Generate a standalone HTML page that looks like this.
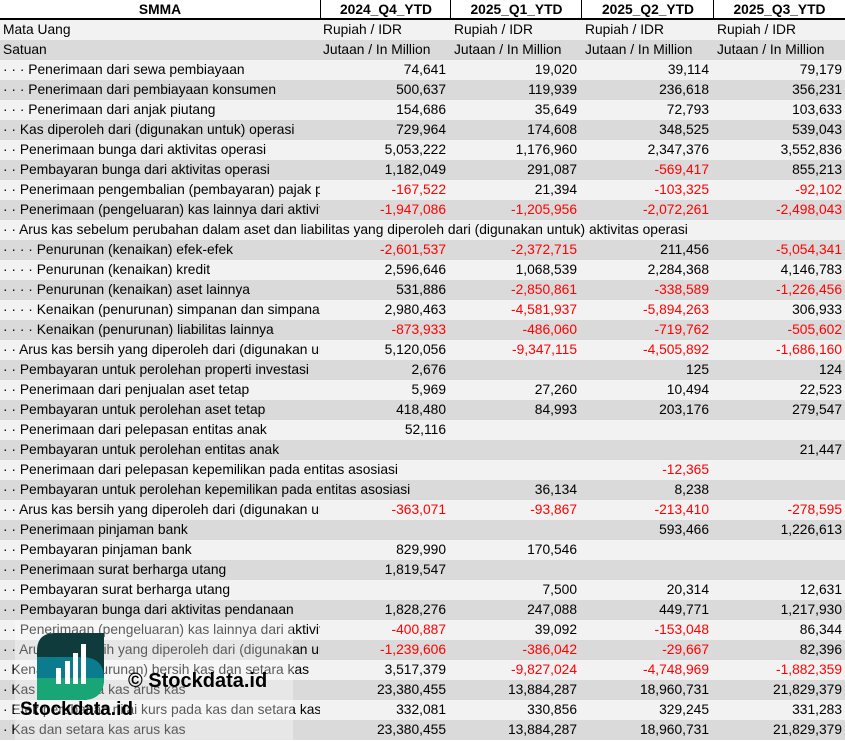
<!DOCTYPE html>
<html><head><meta charset="utf-8"><style>
*{margin:0;padding:0;box-sizing:border-box}
body{width:845px;height:741px;overflow:hidden;background:#fff;font-family:"Liberation Sans",sans-serif;font-size:13.8px;color:#000;position:relative}
.r{position:absolute;left:0;width:845px;height:20px;line-height:20px}
.l{background:#f2f2f2}.d{background:#dadada}
.c{position:absolute;top:0;height:20px;white-space:nowrap;overflow:hidden}
.a{left:3px;width:317px}
.n{text-align:right}
.n1{left:320px;width:126px}.n2{left:450px;width:127px}.n3{left:581px;width:128px}.n4{left:713px;width:129px}
.u1{left:323px}.u2{left:454px}.u3{left:585px}.u4{left:717px}
.red{color:#f00}
.h{position:absolute;top:0;height:20px;line-height:20px;font-weight:bold;text-align:center;border-bottom:2px solid #000}
</style></head><body>
<div class="h" style="left:0;width:320px">SMMA</div>
<div class="h" style="left:320px;width:131px;border-left:1px solid #000">2024_Q4_YTD</div>
<div class="h" style="left:450px;width:132px;border-left:1px solid #000">2025_Q1_YTD</div>
<div class="h" style="left:581px;width:133px;border-left:1px solid #000">2025_Q2_YTD</div>
<div class="h" style="left:713px;width:132px;border-left:1px solid #000">2025_Q3_YTD</div>

<div class="r l" style="top:20px"><div class="c a">Mata Uang</div><div class="c u1">Rupiah / IDR</div><div class="c u2">Rupiah / IDR</div><div class="c u3">Rupiah / IDR</div><div class="c u4">Rupiah / IDR</div></div>
<div class="r d" style="top:40px"><div class="c a">Satuan</div><div class="c u1">Jutaan / In Million</div><div class="c u2">Jutaan / In Million</div><div class="c u3">Jutaan / In Million</div><div class="c u4">Jutaan / In Million</div></div>

<div class="r l" style="top:60px"><div class="c a">· · · Penerimaan dari sewa pembiayaan</div><div class="c n n1">74,641</div><div class="c n n2">19,020</div><div class="c n n3">39,114</div><div class="c n n4">79,179</div></div>
<div class="r d" style="top:80px"><div class="c a">· · · Penerimaan dari pembiayaan konsumen</div><div class="c n n1">500,637</div><div class="c n n2">119,939</div><div class="c n n3">236,618</div><div class="c n n4">356,231</div></div>
<div class="r l" style="top:100px"><div class="c a">· · · Penerimaan dari anjak piutang</div><div class="c n n1">154,686</div><div class="c n n2">35,649</div><div class="c n n3">72,793</div><div class="c n n4">103,633</div></div>
<div class="r d" style="top:120px"><div class="c a">· · Kas diperoleh dari (digunakan untuk) operasi</div><div class="c n n1">729,964</div><div class="c n n2">174,608</div><div class="c n n3">348,525</div><div class="c n n4">539,043</div></div>
<div class="r l" style="top:140px"><div class="c a">· · Penerimaan bunga dari aktivitas operasi</div><div class="c n n1">5,053,222</div><div class="c n n2">1,176,960</div><div class="c n n3">2,347,376</div><div class="c n n4">3,552,836</div></div>
<div class="r d" style="top:160px"><div class="c a">· · Pembayaran bunga dari aktivitas operasi</div><div class="c n n1">1,182,049</div><div class="c n n2">291,087</div><div class="c n n3 red">-569,417</div><div class="c n n4">855,213</div></div>
<div class="r l" style="top:180px"><div class="c a">· · Penerimaan pengembalian (pembayaran) pajak penghasilan</div><div class="c n n1 red">-167,522</div><div class="c n n2">21,394</div><div class="c n n3 red">-103,325</div><div class="c n n4 red">-92,102</div></div>
<div class="r d" style="top:200px"><div class="c a">· · Penerimaan (pengeluaran) kas lainnya dari aktivitas operasi</div><div class="c n n1 red">-1,947,086</div><div class="c n n2 red">-1,205,956</div><div class="c n n3 red">-2,072,261</div><div class="c n n4 red">-2,498,043</div></div>
<div class="r l" style="top:220px"><div class="c" style="left:3px">· · Arus kas sebelum perubahan dalam aset dan liabilitas yang diperoleh dari (digunakan untuk) aktivitas operasi</div></div>
<div class="r d" style="top:240px"><div class="c a">· · · · Penurunan (kenaikan) efek-efek</div><div class="c n n1 red">-2,601,537</div><div class="c n n2 red">-2,372,715</div><div class="c n n3">211,456</div><div class="c n n4 red">-5,054,341</div></div>
<div class="r l" style="top:260px"><div class="c a">· · · · Penurunan (kenaikan) kredit</div><div class="c n n1">2,596,646</div><div class="c n n2">1,068,539</div><div class="c n n3">2,284,368</div><div class="c n n4">4,146,783</div></div>
<div class="r d" style="top:280px"><div class="c a">· · · · Penurunan (kenaikan) aset lainnya</div><div class="c n n1">531,886</div><div class="c n n2 red">-2,850,861</div><div class="c n n3 red">-338,589</div><div class="c n n4 red">-1,226,456</div></div>
<div class="r l" style="top:300px"><div class="c a">· · · · Kenaikan (penurunan) simpanan dan simpanan dari bank lain</div><div class="c n n1">2,980,463</div><div class="c n n2 red">-4,581,937</div><div class="c n n3 red">-5,894,263</div><div class="c n n4">306,933</div></div>
<div class="r d" style="top:320px"><div class="c a">· · · · Kenaikan (penurunan) liabilitas lainnya</div><div class="c n n1 red">-873,933</div><div class="c n n2 red">-486,060</div><div class="c n n3 red">-719,762</div><div class="c n n4 red">-505,602</div></div>
<div class="r l" style="top:340px"><div class="c a">· · Arus kas bersih yang diperoleh dari (digunakan untuk) aktivitas operasi</div><div class="c n n1">5,120,056</div><div class="c n n2 red">-9,347,115</div><div class="c n n3 red">-4,505,892</div><div class="c n n4 red">-1,686,160</div></div>
<div class="r d" style="top:360px"><div class="c a">· · Pembayaran untuk perolehan properti investasi</div><div class="c n n1">2,676</div><div class="c n n3">125</div><div class="c n n4">124</div></div>
<div class="r l" style="top:380px"><div class="c a">· · Penerimaan dari penjualan aset tetap</div><div class="c n n1">5,969</div><div class="c n n2">27,260</div><div class="c n n3">10,494</div><div class="c n n4">22,523</div></div>
<div class="r d" style="top:400px"><div class="c a">· · Pembayaran untuk perolehan aset tetap</div><div class="c n n1">418,480</div><div class="c n n2">84,993</div><div class="c n n3">203,176</div><div class="c n n4">279,547</div></div>
<div class="r l" style="top:420px"><div class="c a">· · Penerimaan dari pelepasan entitas anak</div><div class="c n n1">52,116</div></div>
<div class="r d" style="top:440px"><div class="c a">· · Pembayaran untuk perolehan entitas anak</div><div class="c n n4">21,447</div></div>
<div class="r l" style="top:460px"><div class="c" style="left:3px">· · Penerimaan dari pelepasan kepemilikan pada entitas asosiasi</div><div class="c n n3 red">-12,365</div></div>
<div class="r d" style="top:480px"><div class="c" style="left:3px">· · Pembayaran untuk perolehan kepemilikan pada entitas asosiasi</div><div class="c n n2">36,134</div><div class="c n n3">8,238</div></div>
<div class="r l" style="top:500px"><div class="c a">· · Arus kas bersih yang diperoleh dari (digunakan untuk) aktivitas investasi</div><div class="c n n1 red">-363,071</div><div class="c n n2 red">-93,867</div><div class="c n n3 red">-213,410</div><div class="c n n4 red">-278,595</div></div>
<div class="r d" style="top:520px"><div class="c a">· · Penerimaan pinjaman bank</div><div class="c n n3">593,466</div><div class="c n n4">1,226,613</div></div>
<div class="r l" style="top:540px"><div class="c a">· · Pembayaran pinjaman bank</div><div class="c n n1">829,990</div><div class="c n n2">170,546</div></div>
<div class="r d" style="top:560px"><div class="c a">· · Penerimaan surat berharga utang</div><div class="c n n1">1,819,547</div></div>
<div class="r l" style="top:580px"><div class="c a">· · Pembayaran surat berharga utang</div><div class="c n n2">7,500</div><div class="c n n3">20,314</div><div class="c n n4">12,631</div></div>
<div class="r d" style="top:600px"><div class="c a">· · Pembayaran bunga dari aktivitas pendanaan</div><div class="c n n1">1,828,276</div><div class="c n n2">247,088</div><div class="c n n3">449,771</div><div class="c n n4">1,217,930</div></div>
<div class="r l" style="top:620px"><div class="c a">· · Penerimaan (pengeluaran) kas lainnya dari aktivitas pendanaan</div><div class="c n n1 red">-400,887</div><div class="c n n2">39,092</div><div class="c n n3 red">-153,048</div><div class="c n n4">86,344</div></div>
<div class="r d" style="top:640px"><div class="c a">· · Arus kas bersih yang diperoleh dari (digunakan untuk) aktivitas pendanaan</div><div class="c n n1 red">-1,239,606</div><div class="c n n2 red">-386,042</div><div class="c n n3 red">-29,667</div><div class="c n n4">82,396</div></div>
<div class="r l" style="top:660px"><div class="c a">· Kenaikan (penurunan) bersih kas dan setara kas</div><div class="c n n1">3,517,379</div><div class="c n n2 red">-9,827,024</div><div class="c n n3 red">-4,748,969</div><div class="c n n4 red">-1,882,359</div></div>
<div class="r d" style="top:680px"><div class="c a">· Kas dan setara kas arus kas</div><div class="c n n1">23,380,455</div><div class="c n n2">13,884,287</div><div class="c n n3">18,960,731</div><div class="c n n4">21,829,379</div></div>
<div class="r l" style="top:700px"><div class="c a">· Efek perubahan nilai kurs pada kas dan setara kas</div><div class="c n n1">332,081</div><div class="c n n2">330,856</div><div class="c n n3">329,245</div><div class="c n n4">331,283</div></div>
<div class="r d" style="top:720px"><div class="c a">· Kas dan setara kas arus kas</div><div class="c n n1">23,380,455</div><div class="c n n2">13,884,287</div><div class="c n n3">18,960,731</div><div class="c n n4">21,829,379</div></div>

<div style="position:absolute;left:15px;top:620px;width:278px;height:121px;background:rgba(255,255,255,0.35)"></div>
<svg style="position:absolute;left:37px;top:633px" width="67" height="67" viewBox="0 0 67 67">
<defs><clipPath id="k"><path d="M18 0H67V45Q67 67 45 67H0V18Q0 0 18 0Z"/></clipPath></defs>
<g clip-path="url(#k)">
<rect width="67" height="67" fill="#0f3b3d"/>
<path d="M0 24H44Q67 24 67 45V67H0Z" fill="#0b7b8e"/>
<rect y="45" width="67" height="22" fill="#19a677"/>
</g>
<rect x="19" y="35" width="5" height="16" fill="#fff"/>
<rect x="28" y="28" width="5" height="23" fill="#fff"/>
<rect x="36" y="20" width="5" height="31" fill="#fff"/>
<rect x="44" y="11" width="5" height="40" fill="#fff"/>
</svg>
<div style="position:absolute;left:20px;top:699px;font-weight:bold;font-size:19px;line-height:22px;color:#000">Stockdata.id</div>
<div style="position:absolute;left:128px;top:669px;font-weight:bold;font-size:20px;line-height:24px;color:#000">© Stockdata.id</div>
</body></html>
